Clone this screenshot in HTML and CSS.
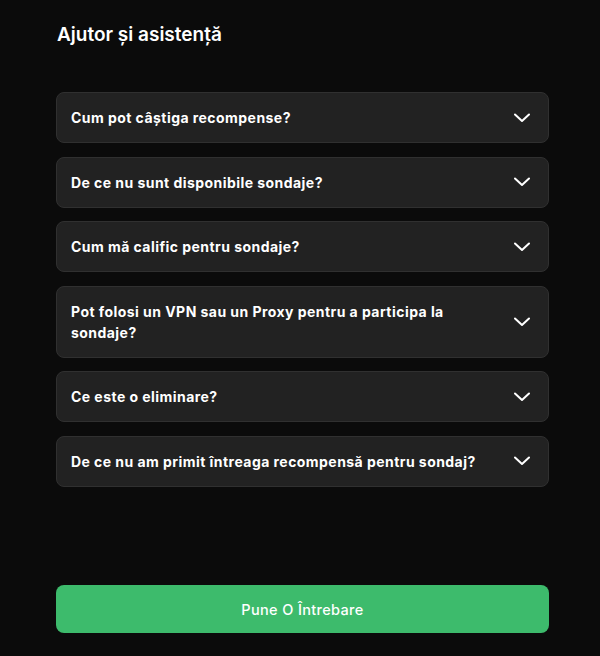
FILE: index.html
```html
<!DOCTYPE html>
<html lang="ro">
<head>
<meta charset="utf-8">
<link rel="stylesheet" href="styles.css">
</head>
<body>
<main class="page">
  <h1 class="title">Ajutor și asistență</h1>
  <section class="faq">
    <div class="item"><span class="q">Cum pot câștiga recompense?</span><svg class="chev" viewBox="0 0 16 10"><path d="M1 1.5 L8 8 L15 1.5"/></svg></div>
    <div class="item"><span class="q">De ce nu sunt disponibile sondaje?</span><svg class="chev" viewBox="0 0 16 10"><path d="M1 1.5 L8 8 L15 1.5"/></svg></div>
    <div class="item"><span class="q">Cum mă calific pentru sondaje?</span><svg class="chev" viewBox="0 0 16 10"><path d="M1 1.5 L8 8 L15 1.5"/></svg></div>
    <div class="item"><span class="q">Pot folosi un VPN sau un Proxy pentru a participa la sondaje?</span><svg class="chev" viewBox="0 0 16 10"><path d="M1 1.5 L8 8 L15 1.5"/></svg></div>
    <div class="item"><span class="q">Ce este o eliminare?</span><svg class="chev" viewBox="0 0 16 10"><path d="M1 1.5 L8 8 L15 1.5"/></svg></div>
    <div class="item"><span class="q">De ce nu am primit întreaga recompensă pentru sondaj?</span><svg class="chev" viewBox="0 0 16 10"><path d="M1 1.5 L8 8 L15 1.5"/></svg></div>
  </section>
  <button class="ask">Pune O Întrebare</button>
</main>
</body>
</html>
```
FILE: styles.css
```css
html, body {
  margin: 0;
  padding: 0;
  background: #0b0b0b;
}
body {
  font-family: Inter, "Noto Sans", sans-serif;
  color: #fff;
}
.page {
  width: 493px;
  margin-left: 56px;
  height: 656px;
  display: flex;
  flex-direction: column;
}
.title {
  margin: 23px 0 0 1px;
  font-size: 19px;
  font-weight: 600;
  line-height: 24px;
  letter-spacing: 0;
}
.faq {
  margin-top: 45px;
  display: flex;
  flex-direction: column;
  gap: 13.5px;
}
.item {
  box-sizing: border-box;
  background: #222222;
  border: 1px solid #303030;
  border-radius: 8px;
  display: flex;
  align-items: center;
  justify-content: space-between;
  padding: 14px 18px 14px 14px;
}
.q {
  font-size: 14px;
  font-weight: 700;
  line-height: 21px;
  letter-spacing: 0.45px;
  max-width: 420px;
}
.chev {
  width: 16px;
  height: 10px;
  flex: none;
  fill: none;
  stroke: #fff;
  stroke-width: 2;
  stroke-linecap: round;
  stroke-linejoin: round;
}
.ask {
  margin-top: auto;
  margin-bottom: 23px;
  height: 48px;
  border: none;
  border-radius: 8px;
  background: #3dbb6c;
  color: #fff;
  font-family: Inter, "Noto Sans", sans-serif;
  font-size: 14.5px;
  font-weight: 500;
  letter-spacing: 0.35px;
}
```
